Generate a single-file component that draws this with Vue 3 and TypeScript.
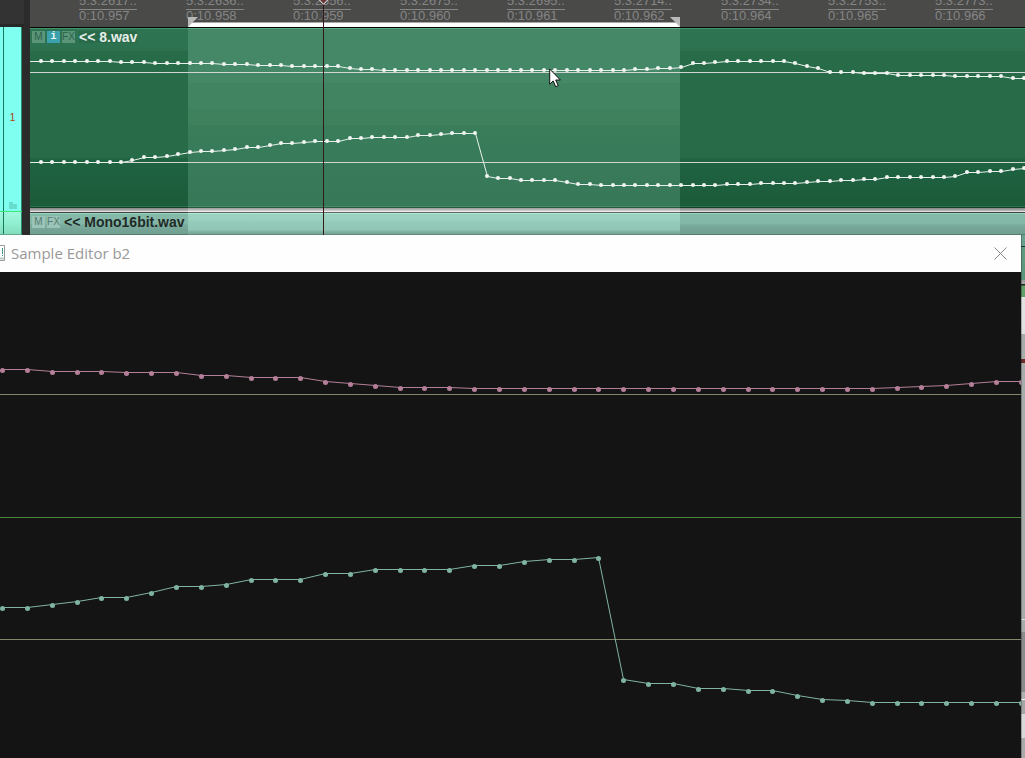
<script setup lang="ts">
type Run = [value: number, count: number]
interface Point { x: number; y: number }

const expand = (runs: Run[]): number[] =>
  runs.flatMap(([value, count]) => Array<number>(count).fill(value))

const plot = (runs: Run[], start: number, step: number): Point[] =>
  expand(runs).map((y, i) => ({ x: Math.round(start + i * step), y }))

const polyline = (points: Point[], dx: number, dy: number): string =>
  points.map((p) => `${p.x + dx},${p.y + dy}`).join(' ')

const ticks = [
  ['5.3.2617..', '0:10.957'],
  ['5.3.2636..', '0:10.958'],
  ['5.3.2656..', '0:10.959'],
  ['5.3.2675..', '0:10.960'],
  ['5.3.2695..', '0:10.961'],
  ['5.3.2714..', '0:10.962'],
  ['5.3.2734..', '0:10.964'],
  ['5.3.2753..', '0:10.965'],
  ['5.3.2773..', '0:10.966'],
]

// Track channels, relative to the top of the clip
const trackLeft = plot(
  [[33, 7], [34, 3], [35, 6], [36, 3], [37, 3], [38, 5], [40, 1], [41, 2], [42, 22], [41, 2], [40, 2],
   [39, 1], [35, 2], [34, 1], [33, 6], [35, 1], [38, 1], [40, 1], [44, 3], [45, 3], [47, 5], [48, 5], [50, 2]],
  11, 11.43,
)
const trackRight = plot(
  [[134, 8], [132, 1], [129, 2], [128, 1], [126, 1], [124, 1], [123, 2], [122, 1], [121, 1], [119, 2],
   [117, 1], [115, 2], [114, 1], [113, 3], [110, 2], [109, 4], [107, 2], [106, 1], [105, 3], [148, 1],
   [150, 2], [152, 4], [154, 1], [156, 2], [157, 11], [156, 3], [155, 4], [154, 1], [153, 2], [152, 2],
   [151, 2], [149, 6], [148, 1], [144, 2], [143, 2], [141, 1], [140, 1]],
  11, 11.43,
)
const trackChannels = [trackLeft, trackRight]

// Editor channels, relative to the top of the editor canvas
const editorChannels = [
  {
    name: 'left',
    points: plot(
      [[98, 2], [100, 3], [101, 3], [104, 2], [106, 3], [110, 1], [112, 1], [114, 1], [116, 3],
       [117, 17], [116, 1], [115, 1], [114, 1], [112, 1], [110, 2]],
      2, 24.85,
    ),
  },
  {
    name: 'right',
    points: plot(
      [[336, 2], [333, 1], [330, 1], [326, 2], [321, 1], [315, 2], [313, 1], [308, 3], [302, 2],
       [298, 4], [294, 2], [290, 1], [288, 2], [286, 1], [408, 1], [412, 2], [417, 2], [419, 2],
       [424, 1], [428, 1], [429, 1], [431, 7]],
      2, 24.85,
    ),
  },
]
</script>

<template>
  <main class="app">
    <section class="arrange">
      <div class="corner"></div>
      <div class="ruler">
        <div v-for="[bar, time] in ticks" :key="time" class="tick">
          <span class="bar">{{ bar }}</span>
          <span class="time">{{ time }}</span>
        </div>
      </div>

      <div class="head">
        <span class="number">1</span>
        <svg class="folder" width="8" height="7" viewBox="0 0 8 7"><path d="M0 0h4v2h4v5H0z" /></svg>
      </div>
      <div class="clip">
        <div class="shade"></div>
        <svg class="wave" width="100%" height="100%">
          <rect class="axis" x="0" y="44" width="100%" height="1" />
          <rect class="axis" x="0" y="134" width="100%" height="1" />
          <g v-for="(points, c) in trackChannels" :key="c">
            <polyline :points="`0,${points[0].y + 0.5} ` + polyline(points, 0.5, 0.5)" />
            <circle v-for="p in points" :key="p.x" :cx="p.x" :cy="p.y" r="2" />
          </g>
        </svg>
        <div class="label">
          <button type="button">M</button>
          <button type="button" class="info">i</button>
          <button type="button">FX</button>
          <span class="name dim">&lt;&lt; 8.wav</span>
        </div>
      </div>

      <div class="head second"></div>
      <div class="clip mono">
        <div class="shade"></div>
        <div class="label">
          <button type="button">M</button>
          <button type="button">FX</button>
          <span class="name">&lt;&lt; Mono16bit.wav</span>
        </div>
      </div>

      <div class="range">
        <svg width="10" height="10" viewBox="0 0 10 10"><path class="flag" d="M0 0h10L0 10z" /></svg>
        <svg width="10" height="10" viewBox="0 0 10 10"><path class="flag" d="M0 0h10v10z" /></svg>
      </div>
      <div class="playhead">
        <svg width="11" height="5" viewBox="0 0 11 5"><path d="M0.5 -1L5.5 4.3L10.5 -1" /></svg>
      </div>
      <svg class="pointer" width="13" height="20" viewBox="0 0 13 20">
        <path d="M0.7 1v15.2l3.5-3.3 2.5 5.8 2.5-1.1-2.5-5.6h4.7z" />
      </svg>
    </section>

    <section class="lower">
      <div class="editor">
        <header class="title">
          <svg class="doc" width="6" height="17" viewBox="0 0 6 17">
            <path class="page" d="M-1 0.5H4.5V15.5H-1" />
            <path class="mark" d="M2.5 3v6M2.5 10v1" />
            <path class="fold" d="M0 13.5h4" />
          </svg>
          <h1>Sample Editor b2</h1>
          <button type="button" class="close" aria-label="Close">
            <svg width="13" height="13" viewBox="0 0 13 13"><path d="M0.5 0.5l12 12M12.5 0.5l-12 12" /></svg>
          </button>
        </header>
        <svg class="canvas" width="100%">
          <rect class="grid" x="0" y="122" width="100%" height="1" />
          <rect class="grid zero" x="0" y="245" width="100%" height="1" />
          <rect class="grid" x="0" y="367" width="100%" height="1" />
          <g v-for="ch in editorChannels" :key="ch.name" :class="ch.name">
            <polyline :points="polyline(ch.points, 0.5, -0.5)" />
            <circle v-for="p in ch.points" :key="p.x" :cx="p.x + 0.5" :cy="p.y + 0.5" r="2.5" />
          </g>
        </svg>
      </div>
      <div class="behind"></div>
    </section>
  </main>
</template>

<style>
html,
body {
  margin: 0;
  background: #141414;
}
</style>

<style scoped>
.app {
  display: flex;
  flex-direction: column;
  min-height: 100vh;
  overflow: hidden;
  font-family: "Liberation Sans", Arial, sans-serif;
}

.arrange {
  position: relative;
  display: grid;
  grid-template-columns: 30px 1fr;
  grid-template-rows: 28px 183px 24px;
  overflow: hidden;
  background: #2b2b2b;
}

.corner {
  margin-right: 6px;
  background: linear-gradient(#333 24px, #272727 24px);
}

.ruler {
  display: flex;
  align-items: flex-end;
  overflow: hidden;
  padding-left: 49px;
  background: #4a4a49;
  border-bottom: 1px solid #050505;
  color: #858585;
  font-size: 13px;
}

.tick {
  flex: 0 0 107px;
  display: flex;
  flex-direction: column;
  align-items: flex-start;
  padding-bottom: 6px;
}

.bar {
  width: 58px;
  line-height: 17px;
  border-bottom: 1px solid #858585;
}

.time {
  line-height: 11px;
}

.head {
  display: flex;
  flex-direction: column;
  align-items: center;
  justify-content: flex-end;
  box-sizing: border-box;
  margin-top: -1px;
  margin-right: 8px;
  padding: 0 0 2px 3px;
  background: linear-gradient(90deg, #7ffff0 3px, #13795a 3px, #13795a 4px, #7ffff0 4px, #7ffff0 21px, #288a68 21px);
}

.number {
  color: #b0420c;
  font-size: 10px;
  line-height: 10px;
  margin-bottom: 79px;
}

.folder {
  fill: #66dccd;
}

.second {
  margin-top: 0;
  border-top: 1px solid #3ee678;
  border-bottom: 1px solid #5fa98d;
  background: linear-gradient(90deg, transparent 3px, #13795a 3px, #13795a 4px, transparent 4px, transparent 21px, #288a68 21px),
    linear-gradient(#a0f8df, #90f0d0 50%, #83dcbc);
}

.clip {
  position: relative;
  overflow: hidden;
  background: linear-gradient(
    #3f9469 1px, #2f7452 1px, #2d7250 23px, #276b48 23px, #276b48 130px,
    #1f6341 130px, #1d5f3e 155px, #1c5b3a 178px, #287450 178px, #287450 179px,
    #153e2a 179px, #153e2a 180px, #858585 180px, #b8b8b8 183px);
}

.shade {
  position: absolute;
  inset: 0 auto 0 158px;
  width: 492px;
  background: linear-gradient(
    #5cab83 1px, #448868 1px, #448868 55px, #408461 55px, #408461 81px,
    #3f815d 81px, #3f815d 97px, #397d5b 97px, #377859 178px, #438c68 178px,
    #438c68 179px, #285a43 179px, #285a43 180px, #999 180px, #d2d2d2 183px);
}

.mono {
  background: linear-gradient(
    #e0e0e0 1px, #424242 1px, #424242 2px, #9bd3c2 2px, #9bd3c2 3px,
    #85baa9 3px, #82b6a6 13px, #79aa9b 14px, #719f91 23px, #527c70 23px);
}

.mono .shade {
  background: linear-gradient(
    #ededed 1px, #626262 1px, #626262 2px, #b0ead6 2px, #b0ead6 3px,
    #9bd2c1 3px, #99cfbe 10px, #95cbbb 10px, #91c6b6 19px, #83b5a6 20px, #76a396 23px, #608c80 23px);
}

.wave {
  position: absolute;
  inset: 0;
}

.axis {
  fill: #d2d6d2;
}

.wave polyline {
  fill: none;
  stroke: #e8f0eb;
}

.wave circle {
  fill: #f0f5f2;
}

.label {
  position: relative;
  display: flex;
  gap: 2px;
  padding: 3px 2px;
}

.mono .label {
  padding-top: 5px;
}

.label button {
  width: 13px;
  height: 12px;
  padding: 0;
  border: 0;
  background: #5b967b;
  color: #2c6048;
  font: 10px/12px "Liberation Sans", Arial, sans-serif;
}

.label .info {
  background: #3aa1ad;
  color: #e8f8f5;
  font-family: "Liberation Mono", monospace;
  font-weight: bold;
}

.mono .label button {
  background: #9ac4b7;
  color: #587c71;
}

.name {
  margin-left: 2px;
  color: #222a27;
  font-size: 14px;
  font-weight: bold;
  line-height: 12px;
}

.dim {
  background: #296a49;
  color: #e6eee9;
}

.range {
  position: absolute;
  top: 17px;
  left: 188px;
  width: 492px;
  height: 10px;
  display: flex;
  justify-content: space-between;
  background: linear-gradient(transparent 5px, #a8a8a8 5px, #a8a8a8 6px, #fff 6px);
}

.flag {
  fill: #b9b9b9;
}

.playhead {
  position: absolute;
  top: 0;
  bottom: 0;
  left: 318px;
  width: 11px;
  background: linear-gradient(90deg, transparent 5px, #35191a 5px, #35191a 6px, transparent 6px);
}

.playhead svg {
  display: block;
}

.playhead path {
  fill: #6b3434;
  stroke: #fff;
}

.pointer {
  position: absolute;
  top: 68px;
  left: 549px;
}

.pointer path {
  fill: #fff;
  stroke: #111;
}

.lower {
  flex: 1;
  display: flex;
}

.editor {
  flex: 1;
  min-width: 0;
  display: flex;
  flex-direction: column;
  background: #141414;
}

.title {
  display: flex;
  align-items: center;
  height: 37px;
  background: #fefefe;
}

.doc {
  flex: none;
  fill: none;
}

.page {
  stroke: #9a9a9a;
}

.mark {
  stroke: #3d9a86;
}

.fold {
  stroke: #b8c8c8;
  stroke-width: 2;
}

h1 {
  flex: 1;
  margin: 0 0 2px 5px;
  color: #999;
  font: 15px/20px "Open Sans", "Noto Sans", sans-serif;
}

.close {
  display: flex;
  align-items: center;
  justify-content: center;
  width: 42px;
  height: 37px;
  padding: 0;
  border: 0;
  background: none;
}

.close path {
  stroke: #888;
  fill: none;
}

.canvas {
  flex: 1;
  display: block;
  min-height: 486px;
}

.canvas polyline {
  fill: none;
}

.grid {
  fill: #85856c;
}

.zero {
  fill: #48853a;
}

.left {
  stroke: #b57f99;
  fill: #b57f99;
}

.right {
  stroke: #7fb5a0;
  fill: #7fb5a0;
}

.canvas circle {
  stroke: none;
}

.behind {
  flex: 0 0 4px;
  background:
    linear-gradient(90deg, rgba(0, 0, 0, 0.25) 1px, transparent 1px),
    linear-gradient(
      #69a18e 11px, #20332d 11px, #20332d 12px, #5f9b82 12px, #5a957c 45px, #999 45px, #aaa 49px,
      #222 49px, #222 50px, #62a06c 51px, #62a06c 62px, #e2e2e2 62px, #e2e2e2 99px,
      #a7adab 99px, #a7adab 124px, #6c2d2d 124px, #6c2d2d 128px, #a7adab 128px, #a7adab 384px,
      #e0e0e0 384px, #e0e0e0 385px, #a7adab 385px, #a7adab 397px, #8b8b8b 397px, #8b8b8b 457px,
      #b0b0b0 457px, #b0b0b0 464px, #fff 464px, #fff 465px, #a5a5a5 465px, #a5a5a5 479px,
      #d8d8d8 479px, #d8d8d8 503px, #aaa 503px);
}
</style>
